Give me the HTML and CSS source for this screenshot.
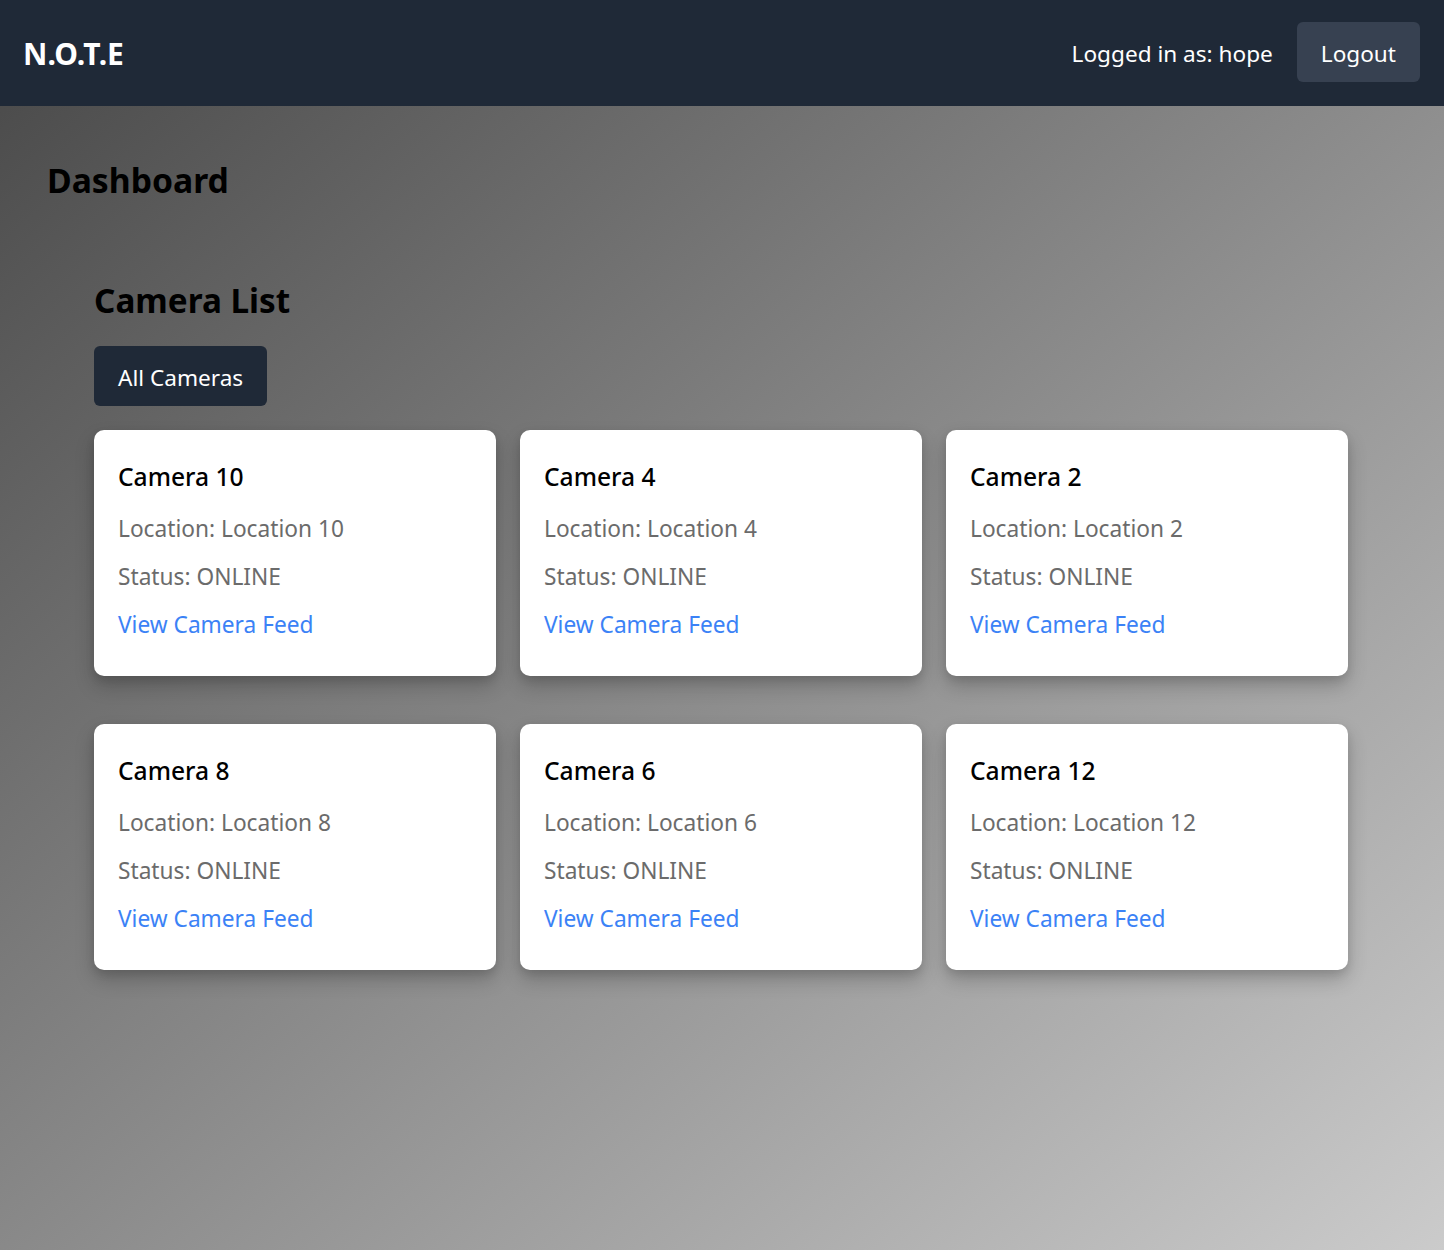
FILE: index.html
```html
<!DOCTYPE html>
<html lang="en">
<head>
<meta charset="utf-8">
<title>N.O.T.E Dashboard</title>
<link rel="stylesheet" href="styles.css">
</head>
<body>
<header class="topbar">
  <div class="logo">N.O.T.E</div>
  <div class="user">
    <span class="user-label">Logged in as: hope</span>
    <button class="logout">Logout</button>
  </div>
</header>
<main class="main">
  <h1 class="page-title">Dashboard</h1>
  <section class="cameras">
    <h2 class="section-title">Camera List</h2>
    <button class="filter-btn">All Cameras</button>
    <div class="grid">
      <div class="card"><h3 class="card-title">Camera 10</h3><p class="card-text">Location: Location 10</p><p class="card-text">Status: ONLINE</p><a class="card-link" href="#">View Camera Feed</a></div>
      <div class="card"><h3 class="card-title">Camera 4</h3><p class="card-text">Location: Location 4</p><p class="card-text">Status: ONLINE</p><a class="card-link" href="#">View Camera Feed</a></div>
      <div class="card"><h3 class="card-title">Camera 2</h3><p class="card-text">Location: Location 2</p><p class="card-text">Status: ONLINE</p><a class="card-link" href="#">View Camera Feed</a></div>
      <div class="card"><h3 class="card-title">Camera 8</h3><p class="card-text">Location: Location 8</p><p class="card-text">Status: ONLINE</p><a class="card-link" href="#">View Camera Feed</a></div>
      <div class="card"><h3 class="card-title">Camera 6</h3><p class="card-text">Location: Location 6</p><p class="card-text">Status: ONLINE</p><a class="card-link" href="#">View Camera Feed</a></div>
      <div class="card"><h3 class="card-title">Camera 12</h3><p class="card-text">Location: Location 12</p><p class="card-text">Status: ONLINE</p><a class="card-link" href="#">View Camera Feed</a></div>
    </div>
  </section>
</main>
</body>
</html>
```
FILE: styles.css
```css
* { box-sizing: border-box; }
html, body { margin: 0; padding: 0; }
body {
  font-family: "Noto Sans", "Open Sans", sans-serif;
  min-height: 1250px;
  background: linear-gradient(to bottom right, #474747 0%, #cbcbcb 100%);
  background-attachment: fixed;
  color: #000;
}
.topbar {
  height: 106px;
  background: #1f2937;
  display: flex;
  align-items: center;
  justify-content: space-between;
  padding: 0 24px 2px 23px;
}
.logo {
  color: #fff;
  font-weight: 700;
  font-size: 30px;
  padding-top: 2px;
}
.user {
  display: flex;
  align-items: center;
  gap: 24px;
}
.user-label {
  color: #fff;
  font-size: 22.6px;
  padding-top: 2px;
}
.logout {
  font-family: inherit;
  font-size: 22.6px;
  color: #fff;
  background: #374151;
  border: none;
  border-radius: 6px;
  height: 60px;
  padding: 2px 24px 0;
}
.main {
  padding: 54px 49px 48px 47px;
}
.page-title {
  margin: 0;
  font-size: 33.7px;
  line-height: 40px;
  font-weight: 700;
}
.cameras {
  padding: 80px 47px 0;
}
.section-title {
  margin: 0 0 26px;
  font-size: 33.3px;
  line-height: 40px;
  font-weight: 700;
}
.filter-btn {
  font-family: inherit;
  font-size: 22.6px;
  color: #fff;
  background: #1f2937;
  border: none;
  border-radius: 6px;
  height: 60px;
  padding: 2px 24px 0;
  margin-bottom: 24px;
}
.grid {
  display: grid;
  grid-template-columns: repeat(3, 1fr);
  column-gap: 24px;
  row-gap: 48px;
}
.card {
  background: #fff;
  border-radius: 10px;
  padding: 31px 24px 33px;
  box-shadow: 0 10px 20px rgba(0, 0, 0, 0.2), 0 4px 8px rgba(0, 0, 0, 0.1);
  display: flex;
  flex-direction: column;
  align-items: flex-start;
}
.card-title {
  margin: 0 0 18px;
  font-size: 24.6px;
  line-height: 32px;
  font-weight: 500;
}
.card-text {
  margin: 0 0 12px;
  font-size: 22.7px;
  line-height: 36px;
  color: #6b6b6b;
}
.card-link {
  font-size: 22.7px;
  line-height: 36px;
  color: #3b82f6;
  text-decoration: none;
}
```
